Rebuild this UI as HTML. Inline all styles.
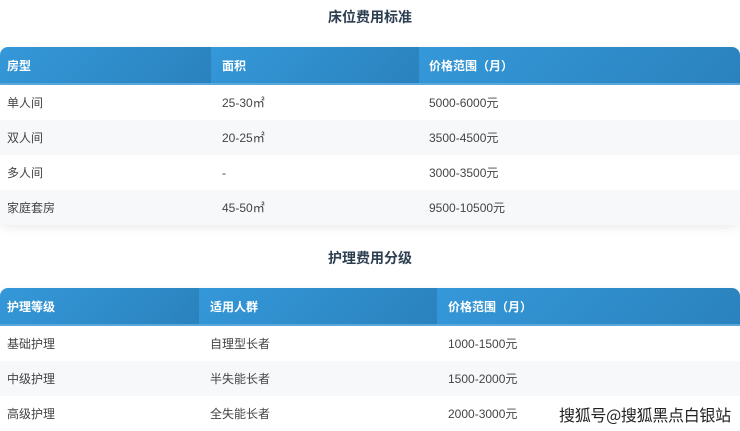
<!DOCTYPE html>
<html><head><meta charset="utf-8"><style>
*{margin:0;padding:0;box-sizing:border-box}
body{width:740px;height:429px;overflow:hidden;background:#fff;font-family:"Liberation Sans","Noto Sans CJK SC",sans-serif;position:relative}
.title{position:absolute;left:0;width:740px;text-align:center;font-size:14px;font-weight:bold;color:#2c3e50}
.tbl{position:absolute;left:0;width:740px;border-radius:8px;overflow:hidden;box-shadow:0 3px 10px rgba(0,0,0,0.08)}
.row{display:flex;height:35px;align-items:center;font-size:12px;color:#444}
.row.alt{background:#f7f8fa}
.row div{padding-left:7px}
.hd{height:38px;color:#fff;font-weight:bold;border-bottom:2px solid #5aa7dc}
.hd div{height:100%;display:flex;align-items:center;background:linear-gradient(135deg,#3598d9,#2a82bd)}
.wm{position:absolute;left:559px;top:402px;font-size:16px;color:#222;letter-spacing:-0.3px;font-family:"Noto Sans CJK SC",sans-serif;text-shadow:0 0 2px #fff,0 0 2px #fff}
</style></head><body>
<div class="title" style="top:7px">床位费用标准</div>
<div class="tbl" style="top:47px">
<div class="row hd"><div style="width:211px">房型</div><div style="width:208px;padding-left:11px">面积</div><div style="flex:1;padding-left:10px">价格范围（月）</div></div>
<div class="row"><div style="width:211px">单人间</div><div style="width:208px;padding-left:11px">25-30㎡</div><div style="flex:1;padding-left:10px">5000-6000元</div></div>
<div class="row alt"><div style="width:211px">双人间</div><div style="width:208px;padding-left:11px">20-25㎡</div><div style="flex:1;padding-left:10px">3500-4500元</div></div>
<div class="row"><div style="width:211px">多人间</div><div style="width:208px;padding-left:11px">-</div><div style="flex:1;padding-left:10px">3000-3500元</div></div>
<div class="row alt"><div style="width:211px">家庭套房</div><div style="width:208px;padding-left:11px">45-50㎡</div><div style="flex:1;padding-left:10px">9500-10500元</div></div>
</div>
<div class="title" style="top:248px">护理费用分级</div>
<div class="tbl" style="top:288px;border-bottom-left-radius:0;border-bottom-right-radius:0">
<div class="row hd"><div style="width:199px">护理等级</div><div style="width:238px;padding-left:11px">适用人群</div><div style="flex:1;padding-left:11px">价格范围（月）</div></div>
<div class="row"><div style="width:199px">基础护理</div><div style="width:238px;padding-left:11px">自理型长者</div><div style="flex:1;padding-left:11px">1000-1500元</div></div>
<div class="row alt"><div style="width:199px">中级护理</div><div style="width:238px;padding-left:11px">半失能长者</div><div style="flex:1;padding-left:11px">1500-2000元</div></div>
<div class="row"><div style="width:199px">高级护理</div><div style="width:238px;padding-left:11px">全失能长者</div><div style="flex:1;padding-left:11px">2000-3000元</div></div>
</div>
<div class="wm">搜狐号@搜狐黑点白银站</div>
</body></html>
